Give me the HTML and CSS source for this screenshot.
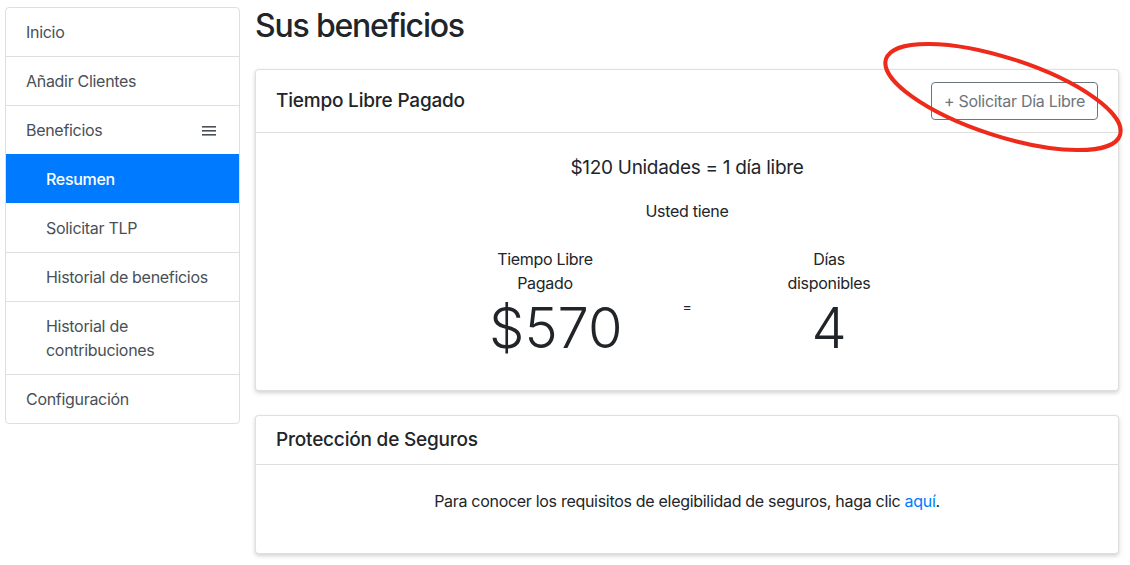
FILE: index.html
```html
<!DOCTYPE html>
<html lang="es">
<head>
<meta charset="utf-8">
<title>Sus beneficios</title>
<link rel="stylesheet" href="styles.css">
</head>
<body>
<div class="layout">
  <nav class="sidebar">
    <a class="item" href="#">Inicio</a>
    <a class="item" href="#">Añadir Clientes</a>
    <a class="item item-toggle" href="#"><span>Beneficios</span>
      <svg class="burger" width="16" height="12" viewBox="0 0 16 12"><rect x="1" y="1" width="14" height="1.6" fill="#495057"/><rect x="1" y="5" width="14" height="1.6" fill="#495057"/><rect x="1" y="9" width="14" height="1.6" fill="#495057"/></svg>
    </a>
    <a class="item sub active" href="#">Resumen</a>
    <a class="item sub" href="#">Solicitar TLP</a>
    <a class="item sub" href="#">Historial de beneficios</a>
    <a class="item sub" href="#">Historial de contribuciones</a>
    <a class="item" href="#">Configuración</a>
  </nav>
  <main class="main">
    <h1 class="title">Sus beneficios</h1>
    <section class="card">
      <header class="card-header">
        <h2 class="card-title">Tiempo Libre Pagado</h2>
        <button class="btn-outline">+ Solicitar Día Libre</button>
      </header>
      <div class="card-body tlp">
        <p class="rate">$120 Unidades = 1 día libre</p>
        <p class="have">Usted tiene</p>
        <div class="stats">
          <div class="stat">
            <div class="label">Tiempo Libre Pagado</div>
            <div class="big">$570</div>
          </div>
          <div class="stat eq">=</div>
          <div class="stat">
            <div class="label">Días disponibles</div>
            <div class="big">4</div>
          </div>
        </div>
      </div>
    </section>
    <section class="card">
      <header class="card-header simple">
        <h2 class="card-title">Protección de Seguros</h2>
      </header>
      <div class="card-body ins">
        <p>Para conocer los requisitos de elegibilidad de seguros, haga clic <a href="#">aquí</a>.</p>
      </div>
    </section>
  </main>
</div>
<svg class="annotation" width="280" height="140" viewBox="0 0 280 140">
  <ellipse cx="133" cy="67" rx="123" ry="39" transform="rotate(18 133 67)" fill="none" stroke="#ee2a1b" stroke-width="4"/>
</svg>
</body>
</html>
```
FILE: styles.css
```css
* { box-sizing: border-box; }
html, body { margin: 0; }
body {
  font-family: Inter, "Noto Sans", "Liberation Sans", sans-serif;
  font-size: 16px;
  line-height: 24px;
  letter-spacing: -0.3px;
  color: #212529;
  background: #fff;
  width: 1130px;
  height: 565px;
  overflow: hidden;
  position: relative;
}
.layout {
  display: flex;
  align-items: flex-start;
  gap: 15px;
  padding: 7px 11px 0 5px;
}
.sidebar {
  width: 235px;
  flex: none;
  display: flex;
  flex-direction: column;
  border: 1px solid rgba(0,0,0,.125);
  border-radius: 4px;
  overflow: hidden;
}
.item {
  display: block;
  padding: 12px 20px;
  color: #495057;
  text-decoration: none;
  border-top: 1px solid rgba(0,0,0,.125);
}
.item:first-child { border-top: none; }
.item.sub { padding-left: 40px; }
.item.active {
  background: #007bff;
  color: #fff;
  border-top-color: #007bff;
  font-weight: 500;
}
.item.active + .item { border-top-color: transparent; }
.item-toggle {
  display: flex;
  justify-content: space-between;
  align-items: center;
  padding-right: 22px;
}
.burger { display: block; margin-top: 1px; }
.main { flex: 1; min-width: 0; }
.title {
  margin: 0 0 24px;
  font-size: 32px;
  line-height: 38px;
  font-weight: 500;
  letter-spacing: -1.2px;
}
.card {
  border: 1px solid rgba(0,0,0,.125);
  border-radius: 4px;
  box-shadow: 0 2px 4px rgba(0,0,0,.18);
  margin-bottom: 24px;
  background: #fff;
}
.card-header {
  display: flex;
  justify-content: space-between;
  align-items: center;
  padding: 12px 20px;
  border-bottom: 1px solid rgba(0,0,0,.125);
}
.card-title {
  margin: 0;
  font-size: 19px;
  line-height: 24px;
  font-weight: 500;
  letter-spacing: -0.2px;
}
.btn-outline {
  font-family: inherit;
  font-size: 16px;
  line-height: 24px;
  letter-spacing: -0.3px;
  padding: 6px 12px;
  color: #6c757d;
  background: transparent;
  border: 1px solid #6c757d;
  border-radius: 4px;
}
.card-body { padding: 24px 20px 28px; text-align: center; }
.card-body p { margin: 0; }
.rate { font-size: 19px; line-height: 22px; margin-bottom: 20px !important; }
.have { margin-bottom: 24px !important; }
.stats {
  display: flex;
  justify-content: center;
}
.stat {
  width: 142px;
  padding: 0 15px;
}
.eq { font-size: 14px; padding-top: 48px; line-height: 24px; }
.big {
  font-size: 56px;
  line-height: 67px;
  font-weight: 300;
  letter-spacing: 0;
}
.ins { padding: 24px 20px; }
.ins p { margin-bottom: 16px; }
.ins a { color: #007bff; text-decoration: none; }
.annotation {
  position: absolute;
  left: 870px;
  top: 30px;
  pointer-events: none;
}
```
